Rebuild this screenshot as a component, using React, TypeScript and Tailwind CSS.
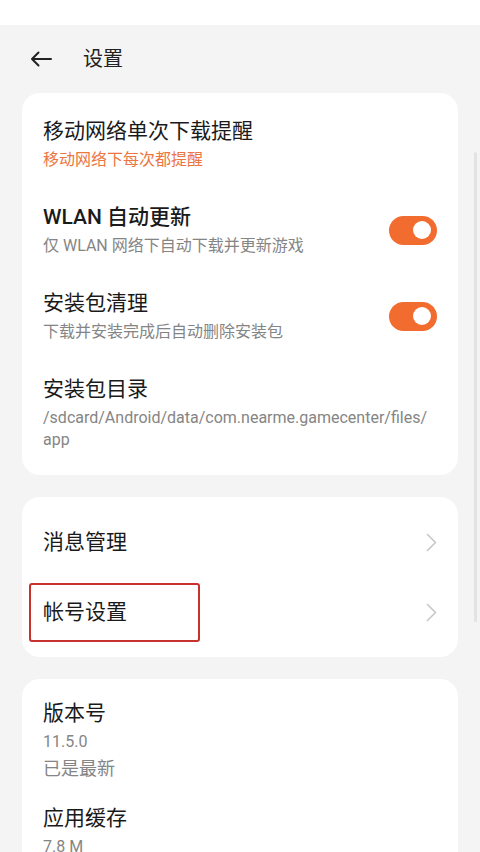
import React from "react";

const font = { fontFamily: 'Roboto, "Noto Sans CJK SC", "Noto Sans", sans-serif' };

function Toggle() {
  return (
    <div className="relative w-[48px] h-[29px] rounded-full bg-[#f26b2f] shrink-0">
      <div className="absolute right-[6px] top-[5.5px] w-[18px] h-[18px] rounded-full bg-white" />
    </div>
  );
}

function Chevron() {
  return (
    <svg width="11" height="19" viewBox="0 0 11 19" className="shrink-0">
      <path d="M1.5 1.5 L9.5 9.5 L1.5 17.5" fill="none" stroke="#c6c6c6" strokeWidth="1.6" strokeLinecap="round" strokeLinejoin="round" />
    </svg>
  );
}

function Title({ children }: { children: React.ReactNode }) {
  return <div className="text-[21px] leading-[28px] font-normal text-[#1a1a1a]">{children}</div>;
}

function Sub({ children, orange }: { children: React.ReactNode; orange?: boolean }) {
  return (
    <div className={orange ? "mt-[4px] text-[16px] leading-[22px] text-[#ec763f]" : "mt-[4px] text-[16px] leading-[22px] text-[#858585]"}>
      {children}
    </div>
  );
}

export default function App() {
  return (
    <div className="relative w-[480px] h-[852px] overflow-hidden bg-[#f4f4f4]" style={font}>
      <div className="h-[25px] bg-white" />
      <div className="h-[68px] flex items-center pl-[30px]">
        <svg width="22" height="16" viewBox="0 0 22 16">
          <path d="M21 8 H2 M8.5 1.5 L2 8 L8.5 14.5" fill="none" stroke="#222" strokeWidth="2" strokeLinecap="round" strokeLinejoin="round" />
        </svg>
        <div className="ml-[31px] text-[20px] leading-[28px] text-[#222]">设置</div>
      </div>

      <div className="mx-[22px] rounded-[18px] bg-white py-2">
        <div className="px-[21px] py-4">
          <Title>移动网络单次下载提醒</Title>
          <Sub orange>移动网络下每次都提醒</Sub>
        </div>
        <div className="px-[21px] py-4 flex items-center justify-between">
          <div>
            <div className="text-[21px] leading-[28px] font-[500] text-[#1a1a1a]">WLAN 自动更新</div>
            <Sub>仅 WLAN 网络下自动下载并更新游戏</Sub>
          </div>
          <Toggle />
        </div>
        <div className="px-[21px] py-4 flex items-center justify-between">
          <div>
            <Title>安装包清理</Title>
            <Sub>下载并安装完成后自动删除安装包</Sub>
          </div>
          <Toggle />
        </div>
        <div className="px-[21px] py-4">
          <Title>安装包目录</Title>
          <div className="mt-[4px] text-[16px] leading-[22px] text-[#858585]">
            <div className="whitespace-nowrap">/sdcard/Android/data/com.nearme.gamecenter/files/</div>
            <div>app</div>
          </div>
        </div>
      </div>

      <div className="mx-[22px] mt-[22px] rounded-[18px] bg-white py-[10px]">
        <div className="h-[70px] px-[21px] flex items-center justify-between">
          <Title>消息管理</Title>
          <Chevron />
        </div>
        <div className="relative h-[70px] px-[21px] flex items-center justify-between">
          <Title>帐号设置</Title>
          <Chevron />
          <div className="absolute left-[7px] top-[6px] w-[171px] h-[59px] border-2 border-[#c8322c] rounded-[3px]" />
        </div>
      </div>

      <div className="mx-[22px] mt-[22px] rounded-[18px] bg-white py-2">
        <div className="px-[21px] py-3">
          <Title>版本号</Title>
          <div className="mt-[4px] text-[16px] leading-[22px] text-[#858585]">11.5.0</div>
          <div className="mt-[5px] text-[18px] leading-[22px] text-[#858585]">已是最新</div>
        </div>
        <div className="px-[21px] py-3">
          <Title>应用缓存</Title>
          <Sub>7.8 M</Sub>
        </div>
      </div>

      <div className="absolute right-[3px] top-[152px] w-[3px] h-[470px] rounded-full bg-[#e3e3e3]" />
    </div>
  );
}
